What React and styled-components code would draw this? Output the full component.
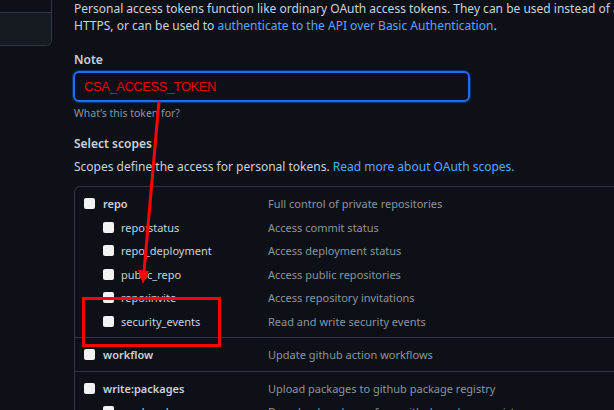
import styled, { createGlobalStyle } from "styled-components";

const GlobalStyle = createGlobalStyle`
  html, body {
    margin: 0;
    padding: 0;
    background: #0d1117;
    overflow: hidden;
  }
  body {
    font-family: "Noto Sans", "Liberation Sans", sans-serif;
    color: #c9d1d9;
  }
`;

const Page = styled.div`
  position: relative;
  display: flex;
  width: 614px;
  height: 410px;
  overflow: hidden;
`;

const Sidebar = styled.nav`
  flex: none;
  width: 51px;
  height: 45px;
  margin-top: -1px;
  border: 1px solid #30363d;
  border-left: none;
  border-radius: 0 0 6px 0;
  overflow: hidden;
`;

const MenuItem = styled.div`
  height: ${(p) => p.$h}px;
  background: ${(p) => (p.$active ? "#161b22" : "#0d1117")};
  border-top: ${(p) => (p.$first ? "none" : "1px solid #30363d")};
`;

const Main = styled.main`
  flex: none;
  width: 700px;
  margin-left: 22px;
`;

const Lead = styled.p`
  margin: 0;
  font-size: 12px;
  line-height: 17px;
  white-space: nowrap;
`;

const Link = styled.a`
  color: #58a6ff;
  text-decoration: none;
`;

const Label = styled.div`
  margin-top: ${(p) => p.$top}px;
  font-size: 12px;
  font-weight: 600;
  line-height: 17px;
`;

const Input = styled.div`
  box-sizing: border-box;
  width: 397px;
  height: 31px;
  margin-top: 3px;
  margin-left: -1px;
  padding: 0 9px;
  display: flex;
  align-items: center;
  border: 2px solid #1f6feb;
  border-radius: 6px;
  box-shadow: 0 0 0 1px #0c2d6b;
  font-family: "Liberation Sans", sans-serif;
  font-size: 13px;
  letter-spacing: -0.45px;
  color: #e60000;
`;

const Hint = styled.div`
  margin-top: 4px;
  font-size: 10.5px;
  line-height: 14px;
  color: #8b949e;
`;

const Note = styled.p`
  margin: 6px 0 0;
  font-size: 12px;
  line-height: 17px;
  white-space: nowrap;
`;

const Table = styled.div`
  margin-top: 11px;
  border: 1px solid #30363d;
  border-right: none;
  border-radius: 6px 0 0 0;
`;

const Group = styled.div`
  padding: 5px 0 4px;
  & + & {
    border-top: 1px solid #30363d;
  }
`;

const Row = styled.div`
  display: grid;
  grid-template-columns: 193px 1fr;
  align-items: center;
  height: 23.5px;
  font-size: 11px;
`;

const Scope = styled.label`
  display: flex;
  align-items: center;
  gap: ${(p) => (p.$sub ? 7 : 8)}px;
  padding-left: ${(p) => (p.$sub ? 28 : 9)}px;
  font-weight: ${(p) => (p.$sub ? 400 : 600)};
  color: #c9d1d9;
`;

const Box = styled.span`
  flex: none;
  width: 11px;
  height: 11px;
  border-radius: 2px;
  background: #f2f2f2;
`;

const Desc = styled.span`
  color: #8b949e;
  white-space: nowrap;
`;

const Markup = styled.svg`
  position: absolute;
  left: 0;
  top: 0;
  pointer-events: none;
`;

const scopes = [
  [
    ["repo", "Full control of private repositories"],
    ["repo:status", "Access commit status", true],
    ["repo_deployment", "Access deployment status", true],
    ["public_repo", "Access public repositories", true],
    ["repo:invite", "Access repository invitations", true],
    ["security_events", "Read and write security events", true],
  ],
  [["workflow", "Update github action workflows"]],
  [
    ["write:packages", "Upload packages to github package registry"],
    ["read:packages", "Download packages from github package registry", true],
  ],
];

export default function App() {
  return (
    <>
      <GlobalStyle />
      <Page>
        <Sidebar>
          <MenuItem $first $h={12} />
          <MenuItem $active $h={33} />
        </Sidebar>
        <Main>
          <Lead>
            Personal access tokens function like ordinary OAuth access tokens. They can be used instead of a password for Git over
            <br />
            HTTPS, or can be used to <Link>authenticate to the API over Basic Authentication</Link>.
          </Lead>
          <Label $top={17}>Note</Label>
          <Input>CSA_ACCESS_TOKEN</Input>
          <Hint>What’s this token for?</Hint>
          <Label $top={15}>Select scopes</Label>
          <Note>
            Scopes define the access for personal tokens. <Link>Read more about OAuth scopes.</Link>
          </Note>
          <Table>
            {scopes.map((group, i) => (
              <Group key={i}>
                {group.map(([name, desc, sub]) => (
                  <Row key={name}>
                    <Scope $sub={sub}>
                      <Box />
                      {name}
                    </Scope>
                    <Desc>{desc}</Desc>
                  </Row>
                ))}
              </Group>
            ))}
          </Table>
        </Main>
        <Markup width="614" height="410">
          <line x1="159" y1="101" x2="144" y2="272" stroke="#ff0000" strokeWidth="3" />
          <polygon points="138,270 149,271 143,284" fill="#ff0000" />
          <rect x="83.5" y="298.5" width="136" height="47" fill="none" stroke="#ff0000" strokeWidth="3" />
        </Markup>
      </Page>
    </>
  );
}
